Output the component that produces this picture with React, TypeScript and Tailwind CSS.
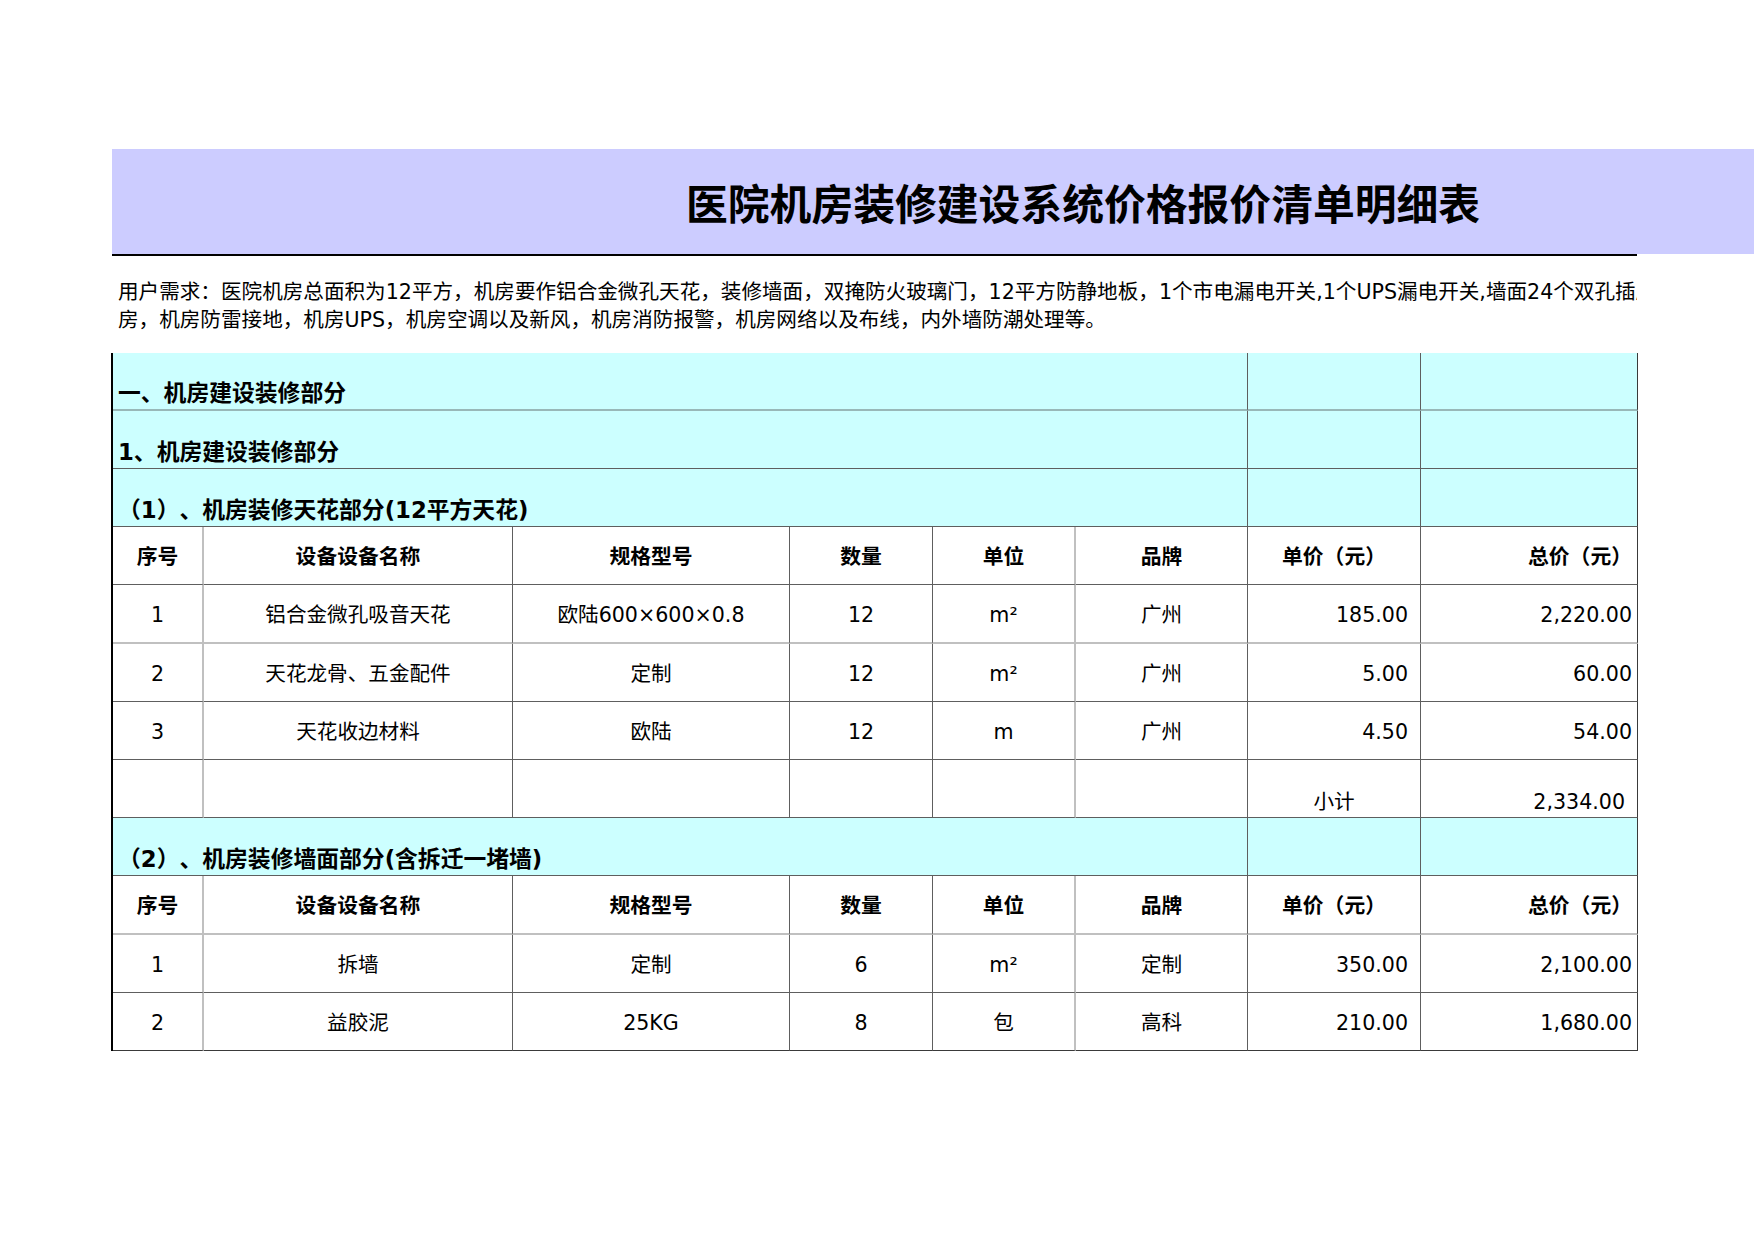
import React from 'react'

type Row = string[]

const table1: Row[] = [
  ['1', '铝合金微孔吸音天花', '欧陆600×600×0.8', '12', 'm²', '广州', '185.00', '2,220.00'],
  ['2', '天花龙骨、五金配件', '定制', '12', 'm²', '广州', '5.00', '60.00'],
  ['3', '天花收边材料', '欧陆', '12', 'm', '广州', '4.50', '54.00'],
]

const table2: Row[] = [
  ['1', '拆墙', '定制', '6', 'm²', '定制', '350.00', '2,100.00'],
  ['2', '益胶泥', '25KG', '8', '包', '高科', '210.00', '1,680.00'],
]

const headers = ['序号', '设备设备名称', '规格型号', '数量', '单位', '品牌', '单价（元）', '总价（元）']

// right border colour per column: 序号 and 单位 columns have the light grey line
const rightBorder = [
  'border-r-2 border-r-[#c0c0c0]',
  'border-r border-r-[#5e5e5e]',
  'border-r border-r-[#5e5e5e]',
  'border-r border-r-[#5e5e5e]',
  'border-r-2 border-r-[#c0c0c0]',
  'border-r border-r-[#5e5e5e]',
  'border-r border-r-[#5e5e5e]',
  'border-r border-r-[#3a3a3a]',
]

const align = [
  'justify-center',
  'justify-center',
  'justify-center',
  'justify-center',
  'justify-center',
  'justify-center',
  'justify-end pr-[12px]',
  'justify-end pr-[5px]',
]

function Section({ title, bottom }: { title: string; bottom: string }) {
  return (
    <>
      <div className={`col-span-6 flex items-end pl-[5px] bg-[#ccffff] text-[22.8px] leading-[32px] font-bold text-black border-r border-r-[#5e5e5e] whitespace-nowrap ${bottom}`}>
        {title}
      </div>
      <div className={`bg-[#ccffff] border-r border-r-[#5e5e5e] ${bottom}`} />
      <div className={`bg-[#ccffff] border-r border-r-[#3a3a3a] ${bottom}`} />
    </>
  )
}

function Line({ cells, bold, bottom }: { cells: string[]; bold?: boolean; bottom: string }) {
  return (
    <>
      {cells.map((c, i) => (
        <div
          key={i}
          className={`flex items-center pt-[4px] ${bold && i === 7 ? 'justify-end pr-[5px]' : bold ? 'justify-center' : align[i]} ${rightBorder[i]} ${bottom} ${bold ? 'font-bold text-[20.8px]' : 'text-[20.6px]'} whitespace-nowrap`}
        >
          {c}
        </div>
      ))}
    </>
  )
}

export default function App() {
  const dark = 'border-b border-b-[#5e5e5e]'
  const light = 'border-b-2 border-b-[#c0c0c0]'
  return (
    <div className="w-[1754px] h-[1240px] bg-white overflow-hidden text-black [text-spacing-trim:space-all] font-['DejaVu_Sans','Noto_Sans_CJK_SC',sans-serif]">
      <div className="pt-[149px]">
        <div className="ml-[112px] h-[105px] bg-[#ccccff] flex items-center pt-[9px] pl-[574px]">
          <h1 className="text-[41.8px] font-bold leading-none whitespace-nowrap">医院机房装修建设系统价格报价清单明细表</h1>
        </div>
        <div className="ml-[112px] w-[1525px] h-[2px] bg-black" />

        <div className="ml-[112px] w-[1525px] h-[96.7px] overflow-hidden pt-[23px] pl-[6px] text-[20.6px] leading-[27.5px]">
          <div className="whitespace-nowrap">用户需求：医院机房总面积为12平方，机房要作铝合金微孔天花，装修墙面，双掩防火玻璃门，12平方防静地板，1个市电漏电开关,1个UPS漏电开关,墙面24个双孔插座，</div>
          <div className="whitespace-nowrap">房，机房防雷接地，机房UPS，机房空调以及新风，机房消防报警，机房网络以及布线，内外墙防潮处理等。</div>
        </div>

        <div className="ml-[111px] w-[1527px] border-l-2 border-l-black grid grid-cols-[91px_309px_277px_143px_143px_172px_173px_217px] auto-rows-[58.2px]">
          <Section title="一、机房建设装修部分" bottom="border-b-2 border-b-[#98b8b8]" />
          <Section title="1、机房建设装修部分" bottom={dark} />
          <Section title="（1）、机房装修天花部分(12平方天花)" bottom={dark} />
          <Line cells={headers} bold bottom={dark} />
          {table1.map((r, i) => (
            <Line key={i} cells={r} bottom={i === 0 ? light : dark} />
          ))}
          {['', '', '', '', '', ''].map((_, i) => (
            <div key={i} className={`${rightBorder[i]} ${dark}`} />
          ))}
          <div className={`flex items-end justify-center leading-[30px] text-[20.6px] ${rightBorder[6]} ${dark}`}>小计</div>
          <div className={`flex items-end justify-end pr-[12px] leading-[30px] text-[20.6px] ${rightBorder[7]} ${dark}`}>2,334.00</div>

          <Section title="（2）、机房装修墙面部分(含拆迁一堵墙)" bottom={dark} />
          <Line cells={headers} bold bottom={light} />
          {table2.map((r, i) => (
            <Line key={i} cells={r} bottom={i === table2.length - 1 ? 'border-b border-b-[#3a3a3a]' : dark} />
          ))}
        </div>
      </div>
    </div>
  )
}
